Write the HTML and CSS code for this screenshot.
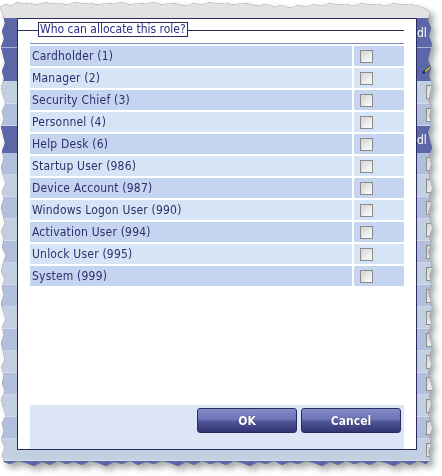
FILE: index.html
```html
<!DOCTYPE html>
<html>
<head>
<meta charset="utf-8">
<title>Who can allocate this role?</title>
<link rel="stylesheet" href="styles.css">
</head>
<body>
<div class="frame">
  <div class="sheet">
    <div class="bg">
      <div class="bg-row top"></div>
      <div class="bg-row head h29"><span class="hd">dl</span></div>
      <div class="bg-row sep"></div>
      <div class="bg-row head h33">
        <svg class="pencil" width="9" height="8" viewBox="0 0 9 8"><path d="M1 7 L8 1" stroke="#1a1a1a" stroke-width="2"/><path d="M3 5.5 L8 1.2" stroke="#f2e23a" stroke-width="1.2"/></svg>
      </div>
      <div class="bg-row a h23"><span class="cbp"></span></div>
      <div class="bg-row b h22"><span class="cbp"></span></div>
      <div class="bg-row head h27"><span class="hd">dl</span></div>
      <div class="bg-row b h22"><span class="cbp"></span></div>
      <div class="bg-row a h22"><span class="cbp"></span></div>
      <div class="bg-row b h22"><span class="cbp"></span></div>
      <div class="bg-row a h22"><span class="cbp"></span></div>
      <div class="bg-row b h22"><span class="cbp"></span></div>
      <div class="bg-row a h22"><span class="cbp"></span></div>
      <div class="bg-row b h22"><span class="cbp"></span></div>
      <div class="bg-row a h22"><span class="cbp"></span></div>
      <div class="bg-row b h22"><span class="cbp"></span></div>
      <div class="bg-row a h22"><span class="cbp"></span></div>
      <div class="bg-row b h22"><span class="cbp"></span></div>
      <div class="bg-row a h22"><span class="cbp"></span></div>
      <div class="bg-row b h22"><span class="cbp"></span></div>
      <div class="bg-row a h22"><span class="cbp"></span></div>
      <div class="bg-row head h27"></div>
    </div>

    <div class="dialog">
      <div class="legend-row">
        <span class="rule lead"></span>
        <span class="legend">Who can allocate this role?</span>
        <span class="rule tail"></span>
      </div>
      <div class="roles">
        <div class="name odd">Cardholder (1)</div><div class="chk odd"><span class="box"></span></div>
        <div class="name even">Manager (2)</div><div class="chk even"><span class="box"></span></div>
        <div class="name odd">Security Chief (3)</div><div class="chk odd"><span class="box"></span></div>
        <div class="name even">Personnel (4)</div><div class="chk even"><span class="box"></span></div>
        <div class="name odd">Help Desk (6)</div><div class="chk odd"><span class="box"></span></div>
        <div class="name even">Startup User (986)</div><div class="chk even"><span class="box"></span></div>
        <div class="name odd">Device Account (987)</div><div class="chk odd"><span class="box"></span></div>
        <div class="name even">Windows Logon User (990)</div><div class="chk even"><span class="box"></span></div>
        <div class="name odd">Activation User (994)</div><div class="chk odd"><span class="box"></span></div>
        <div class="name even">Unlock User (995)</div><div class="chk even"><span class="box"></span></div>
        <div class="name odd">System (999)</div><div class="chk odd"><span class="box"></span></div>
      </div>
      <div class="buttons">
        <button class="btn">OK</button>
        <button class="btn">Cancel</button>
      </div>
    </div>
  </div>
</div>
</body>
</html>
```
FILE: styles.css
```css
html, body {
  margin: 0;
  padding: 0;
  background: #ffffff;
}
body {
  width: 442px;
  height: 476px;
  overflow: hidden;
  font-family: "DejaVu Sans Condensed", "Liberation Sans", sans-serif;
}

.frame {
  width: 434px;
  height: 468px;
  filter: drop-shadow(0 0 0.6px #8c8c8c) drop-shadow(0 0 0.4px #9a9a9a) drop-shadow(4px 4px 3px rgba(0, 0, 0, 0.35));
}

.sheet {
  position: relative;
  width: 434px;
  height: 468px;
  overflow: hidden;
  clip-path: polygon(
    0px 7px, 6px 4px, 11px 6px, 17px 2px, 24px 4px, 30px 3px, 37px 5px, 44px 2px, 52px 4px, 60px 3px, 67px 5px, 75px 2px, 83px 4px, 90px 3px, 98px 5px, 106px 3px, 114px 4px, 122px 2px, 130px 5px, 138px 3px, 146px 4px, 154px 2px, 162px 5px, 170px 3px, 178px 4px, 186px 6px, 194px 3px, 202px 5px, 210px 2px, 218px 4px, 226px 3px, 234px 5px, 242px 3px, 250px 4px, 258px 6px, 266px 4px, 274px 7px, 282px 5px, 290px 8px, 298px 5px, 306px 7px, 314px 4px, 322px 6px, 330px 3px, 338px 5px, 346px 4px, 354px 6px, 362px 3px, 370px 5px, 378px 4px, 386px 6px, 394px 3px, 402px 5px, 410px 4px, 418px 6px, 424px 8px,
    430px 12px, 428px 20px, 431px 28px, 429px 36px, 432px 44px, 430px 52px, 428px 60px, 431px 68px, 429px 76px, 432px 84px, 430px 92px, 428px 100px, 431px 108px, 429px 116px, 431px 124px, 428px 132px, 430px 140px, 432px 148px, 429px 156px, 431px 164px, 428px 172px, 430px 180px, 432px 188px, 429px 196px, 431px 204px, 428px 212px, 430px 220px, 432px 228px, 429px 236px, 431px 244px, 428px 252px, 430px 260px, 432px 268px, 429px 276px, 431px 284px, 428px 292px, 430px 300px, 432px 308px, 429px 316px, 431px 324px, 428px 332px, 430px 340px, 432px 348px, 429px 356px, 431px 364px, 428px 372px, 430px 380px, 432px 388px, 429px 396px, 431px 404px, 428px 412px, 430px 420px, 432px 428px, 429px 436px, 431px 444px, 428px 452px, 430px 460px,
    426px 464px, 418px 461px, 410px 465px, 402px 462px, 394px 466px, 386px 463px, 378px 461px, 370px 465px, 362px 462px, 354px 464px, 346px 461px, 338px 465px, 330px 462px, 322px 466px, 314px 463px, 306px 461px, 298px 464px, 290px 462px, 282px 465px, 274px 461px, 266px 464px, 258px 462px, 250px 466px, 242px 463px, 234px 461px, 226px 465px, 218px 462px, 210px 464px, 202px 461px, 194px 465px, 186px 462px, 178px 466px, 170px 463px, 162px 461px, 154px 464px, 146px 462px, 138px 465px, 130px 461px, 122px 464px, 114px 462px, 106px 466px, 98px 463px, 90px 461px, 82px 465px, 74px 462px, 66px 464px, 58px 461px, 50px 465px, 42px 462px, 34px 466px, 26px 463px, 18px 461px, 10px 464px, 4px 462px,
    2px 455px, 5px 447px, 1px 439px, 4px 431px, 2px 423px, 6px 415px, 3px 407px, 1px 399px, 5px 391px, 2px 383px, 4px 375px, 1px 367px, 5px 359px, 3px 351px, 1px 343px, 4px 335px, 2px 327px, 6px 319px, 3px 311px, 1px 303px, 4px 295px, 2px 287px, 5px 279px, 1px 271px, 3px 263px, 6px 255px, 2px 247px, 4px 239px, 1px 231px, 5px 223px, 3px 215px, 1px 207px, 4px 199px, 2px 191px, 6px 183px, 3px 175px, 1px 167px, 4px 159px, 2px 151px, 5px 143px, 3px 135px, 1px 127px, 4px 119px, 2px 111px, 6px 103px, 3px 95px, 1px 87px, 4px 79px, 2px 71px, 5px 63px, 3px 55px, 1px 47px, 4px 39px, 2px 31px, 5px 23px, 3px 15px
  );
}

/* background page */
.bg {
  display: flex;
  flex-direction: column;
}
.bg-row {
  flex: none;
  display: flex;
  align-items: center;
  box-sizing: border-box;
}
.bg-row.top { height: 18px; background: #e2e2e2; }
.bg-row.head { background: #5b67a8; }
.bg-row.sep { height: 1px; background: #aab3d6; }
.bg-row.a { background: #c3d0e1; border-bottom: 1px solid #d4dcea; }
.bg-row.b { background: #b1bfdc; border-bottom: 1px solid #cdd6e8; }
.h22 { height: 22px; }
.h23 { height: 23px; }
.h27 { height: 27px; }
.h29 { height: 29px; }
.h33 { height: 33px; }
.hd {
  margin-left: 417px;
  color: #ffffff;
  font-size: 12px;
  line-height: 14px;
}
.pencil {
  margin-left: 422px;
  margin-top: 10px;
}
.cbp {
  margin-left: 426px;
  width: 12px;
  height: 12px;
  border: 1px solid #8d8d8d;
  background: linear-gradient(135deg, #d2d2d2, #f6f6f6);
}

/* dialog */
.dialog {
  position: absolute;
  left: 17px;
  top: 18px;
  width: 400px;
  height: 432px;
  box-sizing: border-box;
  border: 1px solid #2b2a5f;
  background: #ffffff;
  padding: 0 12px;
  display: flex;
  flex-direction: column;
}

.legend-row {
  display: flex;
  height: 15px;
  margin: 3px 0 0 -12px;
}
.rule {
  height: 1px;
  margin-top: 8px;
  background: #2b2a5f;
}
.rule.lead { width: 20px; }
.rule.tail { flex: 1; }
.legend {
  box-sizing: border-box;
  height: 15px;
  border: 1px solid #2b2a5f;
  padding: 0 1px;
  font-size: 12px;
  line-height: 13px;
  color: #2f2f86;
}

.roles {
  margin-top: 6px;
  border-top: 1px solid #7f8dc6;
  padding-top: 2px;
  display: grid;
  grid-template-columns: 322px 50px;
  grid-auto-rows: 20px;
  gap: 2px;
}
.odd { background: #c5d5f1; }
.even { background: #d5e5f6; }
.name {
  padding-left: 2px;
  font-size: 12px;
  line-height: 20px;
  letter-spacing: 0.2px;
  color: #302f6c;
  white-space: nowrap;
}
.chk {
  display: flex;
  align-items: flex-start;
}
.box {
  margin: 4px 0 0 6px;
  width: 11px;
  height: 11px;
  border: 1px solid #8b8b8b;
  background: linear-gradient(135deg, #cfcfcf 0%, #e9e9e9 50%, #ffffff 100%);
  box-shadow: inset 1px 1px 0 #dcdcdc;
}

.buttons {
  margin-top: auto;
  height: 44px;
  box-sizing: border-box;
  background: #dde6f6;
  display: flex;
  justify-content: flex-end;
  align-items: flex-start;
  gap: 4px;
  padding: 3px 3px 0 0;
}
.btn {
  width: 100px;
  height: 25px;
  box-sizing: border-box;
  border: 1px solid #2c2b60;
  border-radius: 3px;
  background: linear-gradient(to bottom, #858dcc 0%, #6d73b6 45%, #4f5398 55%, #333572 100%);
  color: #ffffff;
  font-family: "DejaVu Sans Condensed", "Liberation Sans", sans-serif;
  font-size: 12px;
  font-weight: bold;
  text-shadow: 0 0 1px #1e1e50;
  padding: 0;
}
```
